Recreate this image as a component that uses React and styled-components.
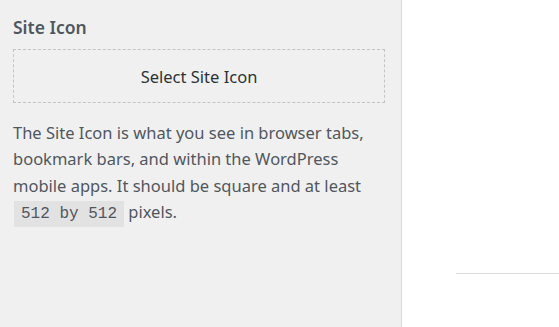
import React from "react";
import styled, { createGlobalStyle } from "styled-components";

const Global = createGlobalStyle`
  html, body {
    margin: 0;
    padding: 0;
    background: #fff;
  }
  body {
    font-family: "Noto Sans", "Open Sans", sans-serif;
  }
`;

const Page = styled.div`
  display: flex;
  width: 559px;
  height: 327px;
  overflow: hidden;
`;

const Panel = styled.div`
  flex-shrink: 0;
  box-sizing: border-box;
  width: 402px;
  padding: 15px 16px 0 13px;
  background: #f0f0f0;
  border-right: 1px solid #dcdcde;
`;

const Title = styled.h3`
  margin: 0 0 9px;
  font-size: 17.5px;
  font-weight: 600;
  line-height: 25px;
  color: #50575e;
`;

const SelectButton = styled.button`
  display: block;
  width: 100%;
  height: 54px;
  padding: 0;
  background: transparent;
  border: 1px dashed #c3c4c7;
  font-family: inherit;
  font-size: 16.5px;
  color: #2c3338;
  cursor: pointer;
`;

const Description = styled.p`
  margin: 17px 0 0;
  font-size: 16.5px;
  line-height: 26.3px;
  color: #50575e;
`;

const Code = styled.code`
  display: inline-block;
  padding: 0 7px;
  margin-left: 1px;
  line-height: 26px;
  background: #e2e2e2;
  font-family: "Liberation Mono", monospace;
  font-size: 16px;
  color: #50575e;
`;

const Preview = styled.div`
  flex: 1;
  display: flex;
  flex-direction: column;
  justify-content: flex-end;
  padding: 0 0 53px 54px;
`;

const Rule = styled.div`
  height: 1px;
  background: #dcdcde;
`;

export default function App() {
  return (
    <Page>
      <Global />
      <Panel>
        <Title>Site Icon</Title>
        <SelectButton>Select Site Icon</SelectButton>
        <Description>
          The Site Icon is what you see in browser tabs, bookmark bars, and
          within the WordPress mobile apps. It should be square and at least{" "}
          <Code>512 by 512</Code> pixels.
        </Description>
      </Panel>
      <Preview>
        <Rule />
      </Preview>
    </Page>
  );
}
